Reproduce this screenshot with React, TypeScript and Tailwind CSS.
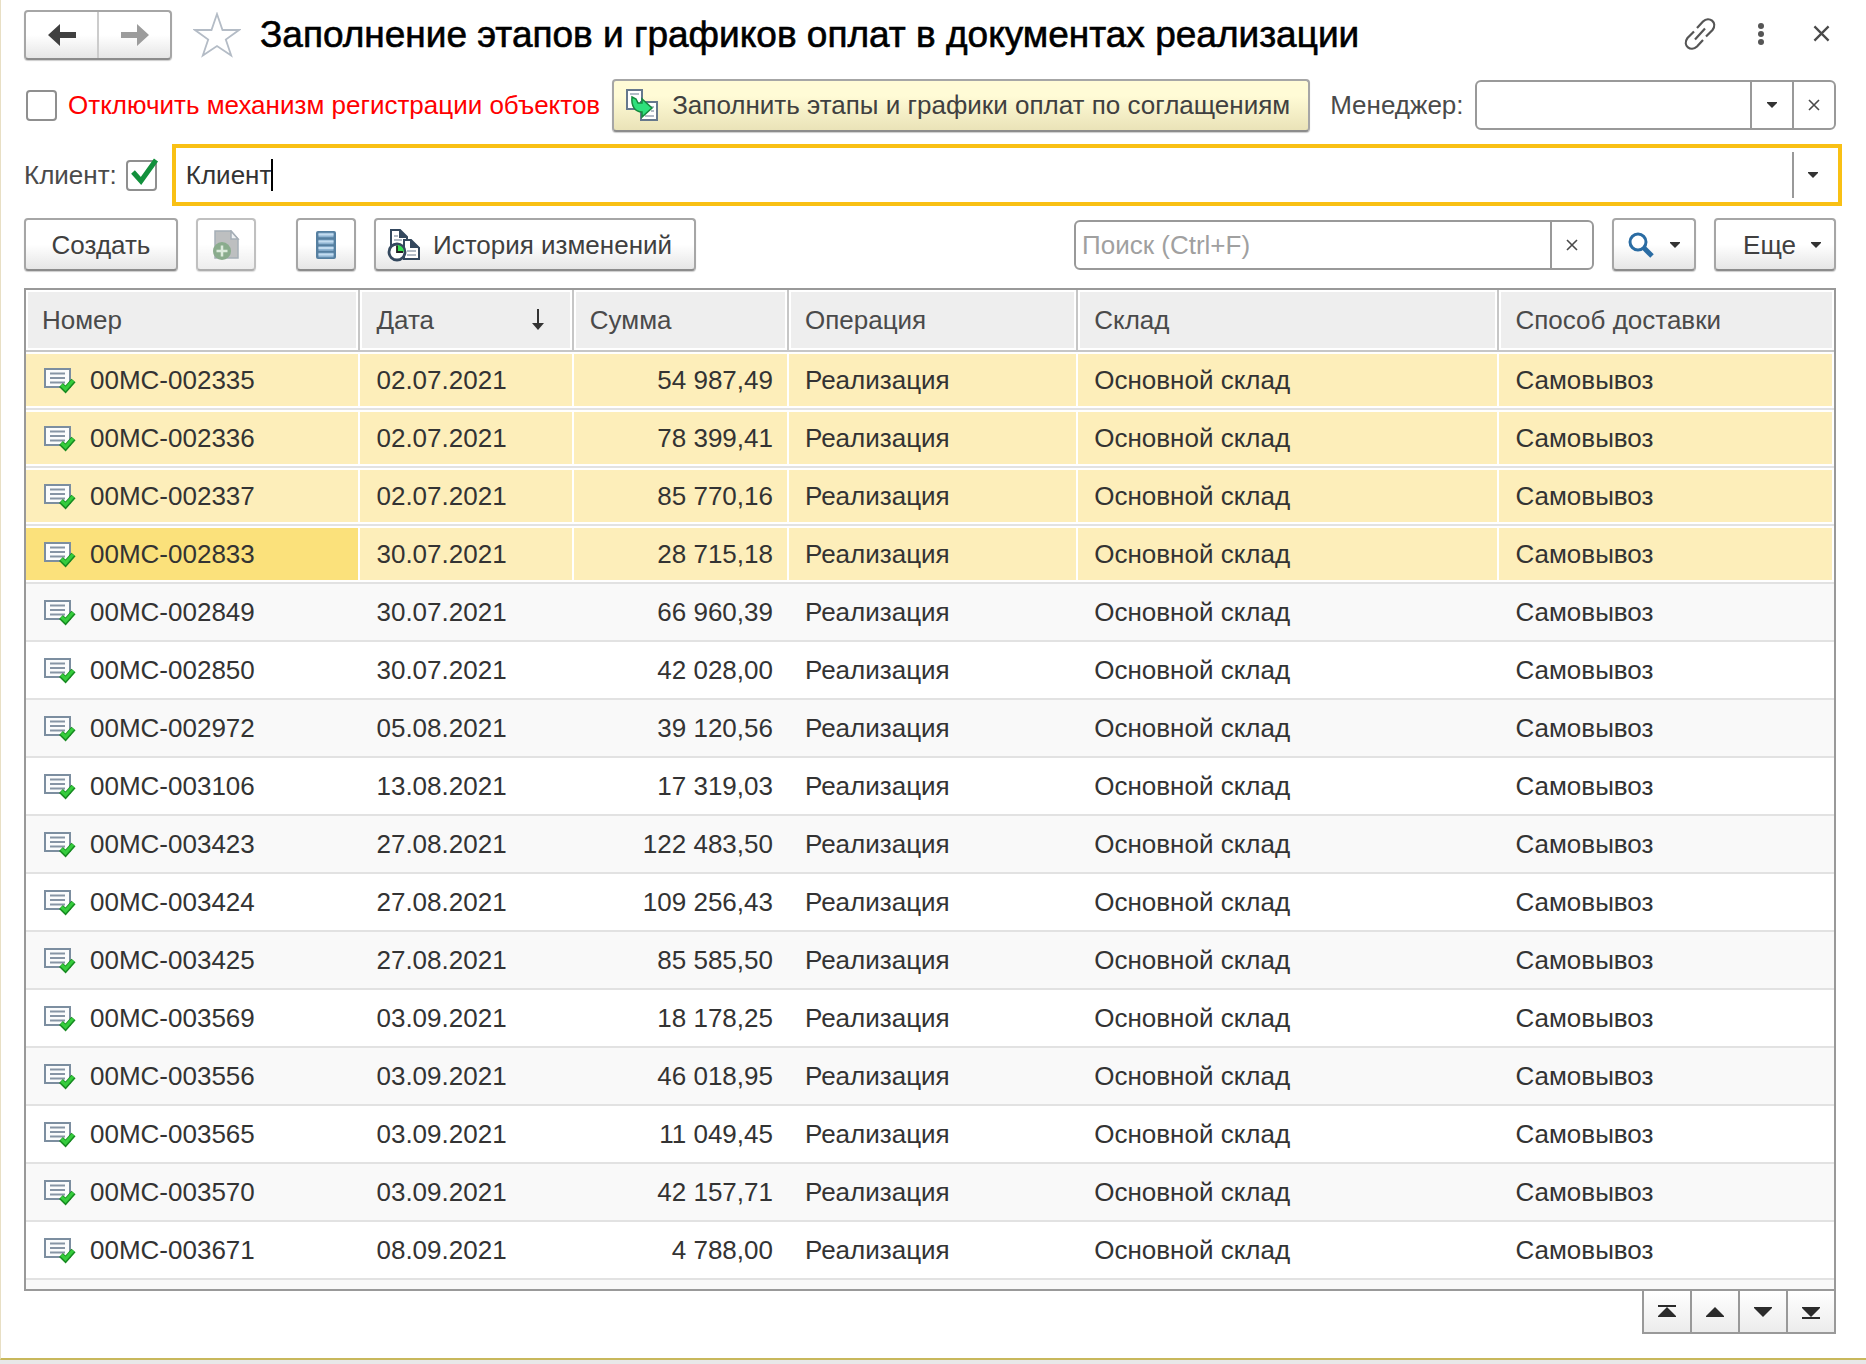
import React, { useState } from 'react';

interface Doc {
  id: string;
  date: string;
  sum: string;
  selected?: boolean;
  current?: boolean;
}

const docs: Doc[] = [
  { id: '00МС-002335', date: '02.07.2021', sum: '54 987,49', selected: true },
  { id: '00МС-002336', date: '02.07.2021', sum: '78 399,41', selected: true },
  { id: '00МС-002337', date: '02.07.2021', sum: '85 770,16', selected: true },
  { id: '00МС-002833', date: '30.07.2021', sum: '28 715,18', selected: true, current: true },
  { id: '00МС-002849', date: '30.07.2021', sum: '66 960,39' },
  { id: '00МС-002850', date: '30.07.2021', sum: '42 028,00' },
  { id: '00МС-002972', date: '05.08.2021', sum: '39 120,56' },
  { id: '00МС-003106', date: '13.08.2021', sum: '17 319,03' },
  { id: '00МС-003423', date: '27.08.2021', sum: '122 483,50' },
  { id: '00МС-003424', date: '27.08.2021', sum: '109 256,43' },
  { id: '00МС-003425', date: '27.08.2021', sum: '85 585,50' },
  { id: '00МС-003569', date: '03.09.2021', sum: '18 178,25' },
  { id: '00МС-003556', date: '03.09.2021', sum: '46 018,95' },
  { id: '00МС-003565', date: '03.09.2021', sum: '11 049,45' },
  { id: '00МС-003570', date: '03.09.2021', sum: '42 157,71' },
  { id: '00МС-003671', date: '08.09.2021', sum: '4 788,00' },
];

const button =
  'flex items-center rounded-[4px] border-2 border-[#a6a6a6] border-b-[#8c8c8c] bg-gradient-to-b from-white from-50% to-[#e6e6e6] shadow-[0_1px_1px_#cccccc] text-[#404040]';

const Caret = () => (
  <svg width="12" height="8" viewBox="0 0 12 8" aria-hidden="true">
    <path d="M1 1h10v1L6 7 1 2z" fill="#333" />
  </svg>
);

const Cross = ({ size = 12 }: { size?: number }) => (
  <svg width={size} height={size} viewBox="0 0 12 12" aria-hidden="true">
    <path d="M1 1l10 10M11 1L1 11" stroke="#4a4a4a" strokeWidth="1.6" fill="none" />
  </svg>
);

const ArrowIcon = ({ color, flip }: { color: string; flip?: boolean }) => (
  <svg width="28" height="22" viewBox="0 0 28 22" className={flip ? 'rotate-180' : ''} aria-hidden="true">
    <path d="M0 11L12 0v8h16v6H12v8z" fill={color} />
  </svg>
);

const DocIcon = () => (
  <svg width="34" height="28" viewBox="-2 -2 34 28" className="shrink-0" aria-hidden="true">
    <rect x="1" y="1" width="25" height="18" fill="#fbfcfd" stroke="#7c8ea0" strokeWidth="2" />
    <path d="M6 5.500h15M6 10h15M6 14.500h15" stroke="#8795a5" strokeWidth="1.800" />
    <path d="M17 17l4.500 4.500 8-9" stroke="#168a20" strokeWidth="5.500" fill="none" />
    <path d="M17.500 17l4 4 7.500-8.500" stroke="#35cc3c" strokeWidth="3.200" fill="none" />
  </svg>
);

const FillIcon = () => (
  <svg width="34" height="34" viewBox="0 0 34 34" aria-hidden="true">
    <path d="M2 2h15v19H2z" fill="#fff" stroke="#66788c" strokeWidth="2" />
    <path d="M5 6h9" stroke="#9aa7b5" strokeWidth="1.500" />
    <path d="M16 14h16v18H16z" fill="#fff" stroke="#66788c" strokeWidth="2" />
    <path d="M25 19h4M26 23h3M20 28h9" stroke="#9aa7b5" strokeWidth="1.500" />
    <path d="M7 9l4 2 2 4h4v-4l10 9-10 9v-5C10 24 6 18 7 9z" fill="#2fe07c" stroke="#15893e" strokeWidth="1.500" />
  </svg>
);

const CopyIcon = () => (
  <svg width="28" height="30" viewBox="0 0 28 30" aria-hidden="true">
    <path d="M3 1h16l7 8v19H3z" fill="#a2a4a6" stroke="#808d99" strokeWidth="1.500" />
    <path d="M19 1v8h7z" fill="#e8ecee" stroke="#808d99" strokeWidth="1.500" />
    <circle cx="10" cy="21" r="9" fill="#5a8a5e" />
    <path d="M10 15.500v11M4.500 21h11" stroke="#cfe3cf" strokeWidth="2.500" />
  </svg>
);

const ListIcon = () => (
  <svg width="20" height="30" viewBox="0 0 20 30" aria-hidden="true">
    <rect x="0" y="1" width="20" height="28" rx="2" fill="#557fa0" />
    <path d="M2.500 5h15M2.500 12h15M2.500 18.500h15M2.500 25h15" stroke="#8fb4d2" strokeWidth="4.500" />
    <path d="M2.500 4.500h15M2.500 11.500h15M2.500 18h15M2.500 24.500h15" stroke="#c3dcf0" strokeWidth="2" />
  </svg>
);

const HistoryIcon = () => (
  <svg width="34" height="34" viewBox="0 0 34 34" aria-hidden="true">
    <path d="M4 2h9l7 7v15H4z" fill="#fff" stroke="#34485e" strokeWidth="2" />
    <path d="M12 1v9h9z" fill="#34485e" />
    <path d="M7 8h4M7 12h8" stroke="#9aa7b5" strokeWidth="1.500" />
    <path d="M17 12h7l8 8v11H17z" fill="#fff" stroke="#34485e" strokeWidth="2" />
    <path d="M23 11v9h10z" fill="#34485e" />
    <path d="M20 23h9M20 27h9" stroke="#9aa7b5" strokeWidth="1.500" />
    <circle cx="10" cy="24" r="8" fill="#fff" stroke="#34485e" strokeWidth="2.800" />
    <path d="M10 24v-7a7 7 0 0 1 7 7z" fill="#35e04f" />
    <path d="M10 17.500V24h6" stroke="#222" strokeWidth="1.800" fill="none" />
  </svg>
);

type PagerKind = 'first' | 'prev' | 'next' | 'last';

const PagerIcon = ({ kind }: { kind: PagerKind }) => (
  <svg width="20" height="16" viewBox="0 0 20 16" aria-hidden="true">
    {kind === 'first' && <path d="M1 1h18v2H1zM10 3l9 9v1H1v-1z" fill="#2b2b2b" />}
    {kind === 'prev' && <path d="M10 3l9 9v1H1v-1z" fill="#2b2b2b" />}
    {kind === 'next' && <path d="M1 3h18v1l-9 9-9-9z" fill="#2b2b2b" />}
    {kind === 'last' && <path d="M1 3h18v1l-9 9-9-9zM1 13h18v2H1z" fill="#2b2b2b" />}
  </svg>
);

const pager: { kind: PagerKind; label: string }[] = [
  { kind: 'first', label: 'В начало' },
  { kind: 'prev', label: 'Назад' },
  { kind: 'next', label: 'Вперед' },
  { kind: 'last', label: 'В конец' },
];

const th = 'border-r-2 border-b-2 border-[#c6c6c6] bg-[#eeeeee] px-4 text-left font-normal text-[#4a4a4a] shadow-[inset_0_0_0_2px_#ffffff] last:border-r-0';

export default function App() {
  const [disabled, setDisabled] = useState(false);
  const [byClient, setByClient] = useState(true);
  const [client, setClient] = useState('Клиент');
  const [manager, setManager] = useState('');
  const [search, setSearch] = useState('');

  return (
    <div className="flex min-h-screen flex-col bg-[#e8e8e8] font-['Liberation_Sans',Arial,sans-serif] text-[26px] leading-[30px] text-[#333333]">
      <main className="flex-1 border-b-2 border-l border-b-[#c8b85c] border-l-[#e8dfc4] bg-white pt-[10px] pr-[30px] pb-[24px] pl-[23px]">
        {/* Title bar */}
        <header className="flex h-[50px] items-center">
          <div className={`${button} h-full w-[148px]`}>
            <button type="button" aria-label="Назад" className="flex h-full flex-1 items-center justify-center border-r-2 border-[#cccccc]">
              <ArrowIcon color="#404040" />
            </button>
            <button type="button" aria-label="Вперед" className="flex h-full flex-1 items-center justify-center">
              <ArrowIcon color="#9c9c9c" flip />
            </button>
          </div>
          <button type="button" aria-label="В избранное" className="ml-[21px]">
            <svg width="48" height="46" viewBox="0 0 48 46" aria-hidden="true">
              <path d="M24 2l5.500 16H46L32.800 27.500l5.400 16L24 34 9.800 43.500l5.400-16L2 18h16.500z" fill="#fff" stroke="#b4bcc6" strokeWidth="1.800" />
            </svg>
          </button>
          <h1 className="ml-[19px] flex-1 text-[37px] leading-[50px] whitespace-nowrap text-black [-webkit-text-stroke:0.600px_#000]">
            Заполнение этапов и графиков оплат в документах реализации
          </h1>
          <div className="flex items-center pr-[6px] pb-[3px]">
            <button type="button" aria-label="Ссылка">
              <svg width="34" height="34" viewBox="0 0 34 34" fill="none" stroke="#555" strokeWidth="2.200" aria-hidden="true">
                <path d="M14 11l6-6.500c6-6 15 1 9.500 8.500L23 19.500M20 23l-6 6.500c-6 6-15-1-9.500-8.500L11 14.500M12 22.500l10-11" />
              </svg>
            </button>
            <button type="button" aria-label="Меню" className="ml-[40px]">
              <svg width="8" height="28" viewBox="0 0 8 28" fill="#555" aria-hidden="true">
                <circle cx="4" cy="6" r="3" />
                <circle cx="4" cy="14" r="3" />
                <circle cx="4" cy="22" r="3" />
              </svg>
            </button>
            <button type="button" aria-label="Закрыть" className="ml-[48px]">
              <Cross size={17} />
            </button>
          </div>
        </header>

        {/* Registration and manager */}
        <div className="mt-[18px] flex h-[54px] items-center">
          <label className="flex items-center gap-[11px] whitespace-nowrap text-[#ff0000]">
            <input
              type="checkbox"
              checked={disabled}
              onChange={(e) => setDisabled(e.target.checked)}
              className="ml-[2px] size-[31px] appearance-none rounded-[4px] border-2 border-[#8f8f8f] bg-white checked:bg-[#12904a]"
            />
            Отключить механизм регистрации объектов
          </label>
          <button
            type="button"
            className="ml-[12px] flex h-[53px] items-center gap-[13px] rounded-[4px] border-2 border-[#a6a6a6] border-b-[#8c8c8c] bg-gradient-to-b from-[#fffbd6] from-30% to-[#eae3b8] pr-[18px] pl-[11px] whitespace-nowrap text-[#404040] shadow-[0_1px_1px_#cccccc]"
          >
            <FillIcon />
            Заполнить этапы и графики оплат по соглащениям
          </button>
          <label htmlFor="manager" className="ml-[20px] text-[#4a4a4a]">Менеджер:</label>
          <div className="ml-[11px] flex h-[50px] min-w-0 flex-1 overflow-hidden rounded-[6px] border-2 border-[#999999] bg-white">
            <input
              id="manager"
              value={manager}
              onChange={(e) => setManager(e.target.value)}
              className="min-w-0 flex-1 px-2 outline-none"
            />
            <button type="button" aria-label="Выбрать менеджера" className="flex w-[42px] items-center justify-center border-l-2 border-[#999999]">
              <Caret />
            </button>
            <button type="button" aria-label="Очистить менеджера" onClick={() => setManager('')} className="flex w-[42px] items-center justify-center border-l-2 border-[#999999]">
              <Cross />
            </button>
          </div>
        </div>

        {/* Client filter */}
        <div className="-mr-[6px] mt-[12px] flex h-[62px] items-center">
          <label htmlFor="client" className="text-[#4a4a4a]">Клиент:</label>
          <span className="relative ml-[9px] flex">
            <input
              type="checkbox"
              aria-label="Отбор по клиенту"
              checked={byClient}
              onChange={(e) => setByClient(e.target.checked)}
              className="size-[31px] appearance-none rounded-[4px] border-2 border-[#8f8f8f] bg-white"
            />
            {byClient && (
              <svg width="32" height="32" viewBox="0 0 32 32" className="pointer-events-none absolute bottom-[4px] left-[2px]" aria-hidden="true">
                <path d="M5 17l8 9L28 5" fill="none" stroke="#12903c" strokeWidth="5" />
              </svg>
            )}
          </span>
          <div className="ml-[15px] flex h-full min-w-0 flex-1 items-center border-4 border-[#f9c014] bg-white pl-[10px]">
            <span className="flex min-w-0 flex-1 items-center">
              <input
                id="client"
                value={client}
                onChange={(e) => setClient(e.target.value)}
                className="field-sizing-content min-w-0 text-[#333333] outline-none"
              />
              <span className="h-[32px] w-[2px] bg-black" />
            </span>
            <button type="button" aria-label="Выбрать клиента" className="flex h-[46px] w-[46px] items-center justify-center border-l-2 border-[#999999] pr-[6px]">
              <Caret />
            </button>
          </div>
        </div>

        {/* Toolbar */}
        <div className="mt-[12px] flex h-[53px] items-center">
          <button type="button" className={`${button} h-full w-[154px] justify-center`}>Создать</button>
          <button type="button" aria-label="Скопировать" disabled className={`${button} ml-[18px] h-full w-[60px] justify-center opacity-70`}>
            <CopyIcon />
          </button>
          <button type="button" aria-label="Список" className={`${button} ml-[40px] h-full w-[60px] justify-center`}>
            <ListIcon />
          </button>
          <button type="button" className={`${button} ml-[18px] h-full gap-[12px] pr-[22px] pl-[11px] whitespace-nowrap`}>
            <HistoryIcon />
            История изменений
          </button>
          <div className="ml-auto flex h-[50px] w-[520px] overflow-hidden rounded-[6px] border-2 border-[#999999] bg-white">
            <input
              aria-label="Поиск"
              placeholder="Поиск (Ctrl+F)"
              value={search}
              onChange={(e) => setSearch(e.target.value)}
              className="min-w-0 flex-1 px-[6px] outline-none placeholder:text-[#a0a0a0]"
            />
            <button type="button" aria-label="Очистить поиск" onClick={() => setSearch('')} className="flex w-[42px] items-center justify-center border-l-2 border-[#999999]">
              <Cross />
            </button>
          </div>
          <button type="button" aria-label="Найти" className={`${button} ml-[18px] h-full w-[84px] justify-center gap-[15px]`}>
            <svg width="26" height="26" viewBox="0 0 26 26" fill="none" stroke="#2a6ca3" aria-hidden="true">
              <circle cx="10" cy="10" r="8" strokeWidth="3" />
              <path d="M15.500 15.500L24 24" strokeWidth="5" />
            </svg>
            <Caret />
          </button>
          <button type="button" className={`${button} ml-[18px] h-full w-[122px] justify-end gap-[14px] pr-[12px]`}>
            Еще
            <Caret />
          </button>
        </div>

        {/* Documents */}
        <div className="mt-[17px] h-[1003px] overflow-hidden border-2 border-[#999999]">
          <table className="w-full table-fixed border-separate border-spacing-0">
            <colgroup>
              <col className="w-[18.500%]" />
              <col className="w-[11.800%]" />
              <col className="w-[11.900%]" />
              <col className="w-[16%]" />
              <col className="w-[23.300%]" />
              <col />
            </colgroup>
            <thead>
              <tr className="h-[62px]">
                <th className={th}>Номер</th>
                <th className={th}>
                  <span className="flex items-center justify-between pr-[12px]">
                    Дата
                    <svg width="12" height="22" viewBox="0 0 12 22" aria-hidden="true">
                      <path d="M6 0v18" stroke="#333" strokeWidth="2" />
                      <path d="M0 14h12L6 21z" fill="#333" />
                    </svg>
                  </span>
                </th>
                <th className={th}>Сумма</th>
                <th className={th}>Операция</th>
                <th className={th}>Склад</th>
                <th className={th}>Способ доставки</th>
              </tr>
            </thead>
            <tbody>
              {docs.map((doc) => {
                const cell = doc.selected
                  ? 'border-b-2 border-[#e2e2e2] bg-[#fdeeba] px-4 shadow-[inset_0_2px_0_#fff,inset_0_-2px_0_#fff,inset_-2px_0_0_#fff]'
                  : 'border-b-2 border-[#e2e2e2] px-4';
                return (
                  <tr key={doc.id} className="h-[58px] odd:bg-[#f9f9f9]">
                    <td className={doc.current ? cell.replace('bg-[#fdeeba]', 'bg-[#fbe17b]') : cell}>
                      <span className="flex items-center gap-[14px]">
                        <DocIcon />
                        {doc.id}
                      </span>
                    </td>
                    <td className={cell}>{doc.date}</td>
                    <td className={`${cell} text-right`}>{doc.sum}</td>
                    <td className={cell}>Реализация</td>
                    <td className={cell}>Основной склад</td>
                    <td className={cell}>Самовывоз</td>
                  </tr>
                );
              })}
              <tr className="h-[58px] bg-[#f9f9f9]">
                <td colSpan={6} />
              </tr>
            </tbody>
          </table>
        </div>

        <nav aria-label="Навигация по списку" className="flex justify-end">
          <div className="flex border-l-2 border-[#999999]">
            {pager.map(({ kind, label }) => (
              <button key={kind} type="button" aria-label={label} className="flex h-[43px] w-[48px] items-center justify-center border-r-2 border-b-2 border-[#999999] bg-gradient-to-b from-white to-[#ececec]">
                <PagerIcon kind={kind} />
              </button>
            ))}
          </div>
        </nav>
      </main>
      <div className="h-[4px]" />
    </div>
  );
}
